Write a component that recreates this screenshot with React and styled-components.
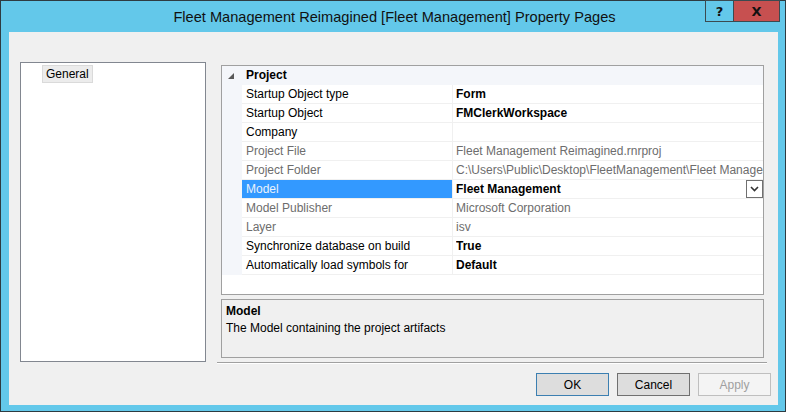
import styled, { createGlobalStyle } from 'styled-components';

const GlobalStyle = createGlobalStyle`
  html, body {
    margin: 0;
    padding: 0;
    background: #ffffff;
  }
  * {
    box-sizing: border-box;
  }
`;

const Window = styled.div`
  width: 786px;
  height: 412px;
  border: 1px solid #2e3b41;
  background: #63c8ea;
  display: flex;
  flex-direction: column;
  padding: 0 7px 6px 8px;
  font-family: 'Liberation Sans', Arial, sans-serif;
`;

const TitleBar = styled.div`
  height: 31px;
  flex-shrink: 0;
  display: flex;
  align-items: flex-start;
  position: relative;
`;

const TitleText = styled.div`
  flex: 1;
  text-align: center;
  font-size: 14.6px;
  color: #111111;
  padding-top: 8px;
  padding-left: 2px;
`;

const Caption = styled.div`
  position: absolute;
  top: -1px;
  right: -2px;
  display: flex;
`;

const CaptionButton = styled.div`
  height: 22px;
  width: ${(p) => p.$w}px;
  background: ${(p) => p.$bg};
  border: 1px solid #3b4a50;
  margin-left: -1px;
  display: flex;
  align-items: center;
  justify-content: center;
  font-family: 'DejaVu Sans', sans-serif;
  font-weight: bold;
  font-size: ${(p) => p.$fs}px;
  color: #111111;
`;

const Client = styled.div`
  flex: 1;
  background: #f0f0f0;
  display: flex;
  flex-direction: column;
`;

const Content = styled.div`
  display: flex;
  align-items: flex-start;
  padding: 30px 0 0 11px;
`;

const Tree = styled.div`
  width: 186px;
  height: 300px;
  background: #ffffff;
  border: 1px solid #828790;
  padding: 1px 0 0 21px;
  margin-right: 15px;
`;

const TreeItem = styled.div`
  display: inline-block;
  height: 18px;
  padding: 0 3px;
  font-size: 12px;
  line-height: 16px;
  color: #000000;
  background: #ececec;
  border: 1px solid #dadada;
`;

const RightCol = styled.div`
  width: 543px;
  margin-top: 3px;
  display: flex;
  flex-direction: column;
`;

const Grid = styled.div`
  height: 230px;
  background: #ffffff;
  border: 1px solid #a0a0a0;
  display: flex;
  flex-direction: column;
`;

const Row = styled.div`
  display: flex;
  height: 19px;
  font-size: 12px;
  line-height: 18px;
`;

const Gutter = styled.div`
  width: 20px;
  flex-shrink: 0;
  background: #f4f6fa;
  display: flex;
  align-items: center;
  justify-content: center;
  padding-right: 2px;
`;

const CategoryLabel = styled.div`
  flex: 1;
  background: #f4f6fa;
  font-weight: bold;
  padding-left: 4px;
  color: #000000;
`;

const Label = styled.div`
  width: 211px;
  flex-shrink: 0;
  padding-left: 4px;
  border-bottom: 1px solid #f0f0f0;
  border-right: 1px solid #f0f0f0;
  white-space: nowrap;
  overflow: hidden;
  background: ${(p) => (p.$selected ? '#3399ff' : '#ffffff')};
  color: ${(p) => (p.$selected ? '#eaf2fb' : p.$dim ? '#6d6d6d' : '#000000')};
`;

const Value = styled.div`
  flex: 1;
  min-width: 0;
  padding-left: 3px;
  border-bottom: 1px solid #f0f0f0;
  white-space: nowrap;
  overflow: hidden;
  display: flex;
  align-items: center;
  font-weight: ${(p) => (p.$bold ? 'bold' : 'normal')};
  color: ${(p) => (p.$dim ? '#6d6d6d' : '#000000')};
`;

const ValueText = styled.span`
  flex: 1;
  overflow: hidden;
  white-space: nowrap;
`;

const DropButton = styled.div`
  width: 17px;
  height: 18px;
  border: 1px solid #707070;
  background: #ffffff;
  display: flex;
  align-items: center;
  justify-content: center;
  flex-shrink: 0;
`;

const Filler = styled.div`
  flex: 1;
  background: #ffffff;
`;

const Desc = styled.div`
  margin-top: 4px;
  height: 59px;
  border: 1px solid #a0a0a0;
  background: #f0f0f0;
  padding: 3px 0 0 4px;
  font-size: 12px;
  line-height: 17px;
  color: #000000;
`;

const DescTitle = styled.div`
  font-weight: bold;
`;

const Separator = styled.div`
  margin-left: 208px;
  width: 550px;
  height: 2px;
  border-top: 1px solid #a0a0a0;
  border-bottom: 1px solid #ffffff;
`;

const ButtonRow = styled.div`
  display: flex;
  justify-content: flex-end;
  gap: 8px;
  padding: 9px 7px 0 0;
`;

const Button = styled.div`
  width: 73px;
  height: 23px;
  display: flex;
  align-items: center;
  justify-content: center;
  font-size: 12px;
  border: 1px solid ${(p) => (p.$default ? '#3c7fb1' : p.$disabled ? '#bfbfbf' : '#707070')};
  background: ${(p) => (p.$disabled ? '#f4f4f4' : '#dddddd')};
  color: ${(p) => (p.$disabled ? '#a0a0a0' : '#000000')};
`;

const rows = [
  { label: 'Startup Object type', value: 'Form', bold: true },
  { label: 'Startup Object', value: 'FMClerkWorkspace', bold: true },
  { label: 'Company', value: '' },
  { label: 'Project File', value: 'Fleet Management Reimagined.rnrproj', dim: true },
  {
    label: 'Project Folder',
    value: 'C:\\Users\\Public\\Desktop\\FleetManagement\\Fleet Management',
    dim: true,
  },
  { label: 'Model', value: 'Fleet Management', bold: true, selected: true, drop: true },
  { label: 'Model Publisher', value: 'Microsoft Corporation', dim: true },
  { label: 'Layer', value: 'isv', dim: true },
  { label: 'Synchronize database on build', value: 'True', bold: true },
  { label: 'Automatically load symbols for', value: 'Default', bold: true },
];

const Expander = () => (
  <svg width="6" height="6" viewBox="0 0 6 6">
    <polygon points="6,0 6,6 0,6" fill="#595959" />
  </svg>
);

const Chevron = () => (
  <svg width="9" height="6" viewBox="0 0 9 6">
    <polyline points="1,1 4.5,4.5 8,1" fill="none" stroke="#333333" strokeWidth="1.6" />
  </svg>
);

const App = () => {
  return (
    <>
      <GlobalStyle />
      <Window>
        <TitleBar>
          <TitleText>Fleet Management Reimagined [Fleet Management] Property Pages</TitleText>
          <Caption>
            <CaptionButton $w={29} $bg="#63c8ea" $fs={13}>?</CaptionButton>
            <CaptionButton $w={47} $bg="#c75050" $fs={13}>X</CaptionButton>
          </Caption>
        </TitleBar>
        <Client>
          <Content>
            <Tree>
              <TreeItem>General</TreeItem>
            </Tree>
            <RightCol>
              <Grid>
                <Row>
                  <Gutter>
                    <Expander />
                  </Gutter>
                  <CategoryLabel>Project</CategoryLabel>
                </Row>
                {rows.map((r) => (
                  <Row key={r.label}>
                    <Gutter />
                    <Label $selected={r.selected} $dim={r.dim}>
                      {r.label}
                    </Label>
                    <Value $bold={r.bold} $dim={r.dim}>
                      <ValueText>{r.value}</ValueText>
                      {r.drop && (
                        <DropButton>
                          <Chevron />
                        </DropButton>
                      )}
                    </Value>
                  </Row>
                ))}
                <Filler />
              </Grid>
              <Desc>
                <DescTitle>Model</DescTitle>
                <div>The Model containing the project artifacts</div>
              </Desc>
            </RightCol>
          </Content>
          <Separator />
          <ButtonRow>
            <Button $default>OK</Button>
            <Button>Cancel</Button>
            <Button $disabled>Apply</Button>
          </ButtonRow>
        </Client>
      </Window>
    </>
  );
};

export default App;
